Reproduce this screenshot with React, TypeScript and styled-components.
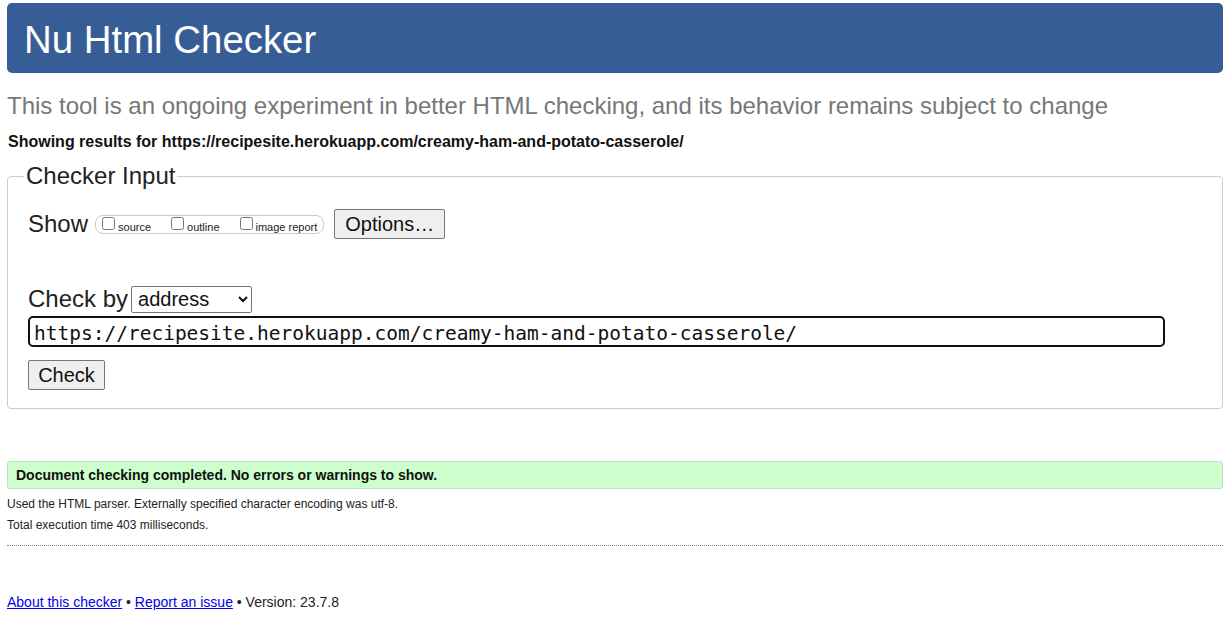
import styled, { createGlobalStyle } from "styled-components";

const GlobalStyle = createGlobalStyle`
  html, body {
    margin: 0;
    padding: 0;
    background: #fff;
  }
  body {
    font-family: "Liberation Sans", Arial, sans-serif;
    color: #222;
  }
`;

const Page = styled.div`
  padding: 3px 7px 0;
`;

const Banner = styled.h1`
  box-sizing: border-box;
  margin: 0;
  height: 70px;
  display: flex;
  align-items: center;
  padding: 3px 0 0 17px;
  background-color: #365d95;
  border-radius: 5px;
  color: #fff;
  font-size: 38.4px;
  font-weight: normal;
  line-height: 44px;
`;

const Tagline = styled.p`
  margin: 19px 0 0;
  font-size: 24px;
  line-height: 28px;
  color: #777;
`;

const ResultsFor = styled.p`
  margin: 13px 0 0 1px;
  font-size: 16px;
  line-height: 18px;
  font-weight: bold;
  color: #111;
`;

const InputSet = styled.fieldset`
  margin: 11px 0 0;
  padding: 0 20px 18px;
  border: 1px solid #ccc;
  border-radius: 4px;
`;

const Legend = styled.legend`
  margin-left: -4px;
  padding: 0 2px;
  font-size: 24px;
  line-height: 28px;
  color: #222;
`;

const Row = styled.div<{ $top: number; $height: number }>`
  display: flex;
  align-items: center;
  margin-top: ${(p) => p.$top}px;
  height: ${(p) => p.$height}px;
`;

const BigLabel = styled.span`
  font-size: 24px;
  line-height: 28px;
  color: #222;
`;

const Pill = styled.div`
  display: flex;
  align-items: center;
  gap: 20px;
  height: 17px;
  margin-left: 7px;
  padding: 0 6px;
  border: 1px solid #ccc;
  border-radius: 8px;
`;

const Option = styled.label`
  display: flex;
  align-items: center;
  gap: 3px;
  font-size: 11px;
  color: #222;
  padding-top: 5px;

  input {
    margin: 0;
    width: 13px;
    height: 13px;
    position: relative;
    top: -3px;
  }
`;

const Button = styled.button<{ $width: number }>`
  height: 30px;
  width: ${(p) => p.$width}px;
  padding: 0;
  font-family: "Liberation Sans", Arial, sans-serif;
  font-size: 20px;
  color: #111;
  background: #efefef;
  border: 1px solid #767676;
  border-radius: 2px;
`;

const OptionsButton = styled(Button)`
  margin-left: 10px;
`;

const Select = styled.select`
  height: 27px;
  width: 121px;
  margin-left: 3px;
  font-family: "Liberation Sans", Arial, sans-serif;
  font-size: 20px;
  color: #111;
  background: #fff;
  border: 1px solid #767676;
  border-radius: 2px;
  padding: 0 2px;
`;

const UrlInput = styled.input`
  display: block;
  box-sizing: border-box;
  margin-top: 3px;
  width: 1137px;
  height: 31px;
  padding: 3px 0 0 4px;
  border: 2px solid #111;
  border-radius: 5px;
  font-family: "DejaVu Sans Mono", "Liberation Mono", monospace;
  font-size: 19.5px;
  color: #111;
  outline: none;
`;

const CheckRow = styled.div`
  margin-top: 13px;
`;

const Success = styled.p`
  margin: 52px 0 0;
  height: 26px;
  display: flex;
  align-items: center;
  padding-left: 8px;
  background: #ccffcc;
  border: 1px solid #c4dcc4;
  border-radius: 3px;
  font-size: 14px;
  font-weight: bold;
  color: #111;
`;

const Detail = styled.p<{ $top: number }>`
  margin: ${(p) => p.$top}px 0 0;
  font-size: 12px;
  line-height: 14px;
  color: #222;
`;

const Divider = styled.hr`
  margin: 13px 0 0;
  border: 0;
  border-top: 1px dotted #888;
`;

const Footer = styled.p`
  margin: 48px 0 0;
  font-size: 14px;
  line-height: 16px;
  color: #222;

  a {
    color: #0000ee;
    text-decoration: underline;
  }
`;

export default function App() {
  const url = "https://recipesite.herokuapp.com/creamy-ham-and-potato-casserole/";

  return (
    <>
      <GlobalStyle />
      <Page>
        <Banner>Nu Html Checker</Banner>
        <Tagline>
          This tool is an ongoing experiment in better HTML checking, and its behavior remains subject to change
        </Tagline>
        <ResultsFor>Showing results for {url}</ResultsFor>

        <InputSet>
          <Legend>Checker Input</Legend>
          <Row $top={18} $height={32}>
            <BigLabel>Show</BigLabel>
            <Pill>
              <Option>
                <input type="checkbox" />
                source
              </Option>
              <Option>
                <input type="checkbox" />
                outline
              </Option>
              <Option>
                <input type="checkbox" />
                image report
              </Option>
            </Pill>
            <OptionsButton $width={111}>Options…</OptionsButton>
          </Row>
          <Row $top={45} $height={28}>
            <BigLabel>Check by</BigLabel>
            <Select defaultValue="address">
              <option value="address">address</option>
              <option value="file">file upload</option>
              <option value="text">text input</option>
            </Select>
          </Row>
          <UrlInput type="url" defaultValue={url} />
          <CheckRow>
            <Button $width={77}>Check</Button>
          </CheckRow>
        </InputSet>

        <Success>Document checking completed. No errors or warnings to show.</Success>
        <Detail $top={8}>Used the HTML parser. Externally specified character encoding was utf-8.</Detail>
        <Detail $top={7}>Total execution time 403 milliseconds.</Detail>
        <Divider />

        <Footer>
          <a href="#about">About this checker</a> • <a href="#issue">Report an issue</a> • Version: 23.7.8
        </Footer>
      </Page>
    </>
  );
}
